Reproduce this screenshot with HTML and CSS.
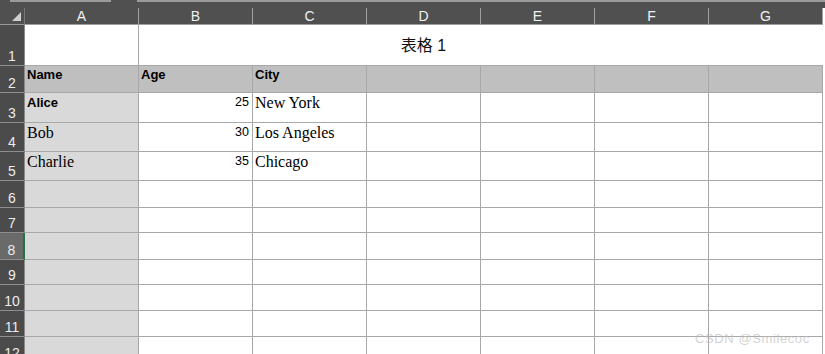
FILE: index.html
```html
<!DOCTYPE html>
<html lang="zh">
<head>
  <meta charset="UTF-8">
  <title>表格 1</title>
  <link rel="stylesheet" href="styles.css">
</head>
<body>
  <div class="topbar">
    <span class="tab tab-a"></span>
    <span class="tab tab-b"></span>
  </div>

  <div class="sheet">
    <!-- column headers -->
    <div class="corner"><span class="corner-mark"></span></div>
    <div class="colhead">A</div>
    <div class="colhead">B</div>
    <div class="colhead">C</div>
    <div class="colhead">D</div>
    <div class="colhead">E</div>
    <div class="colhead">F</div>
    <div class="colhead">G</div>

    <!-- row 1 -->
    <div class="rowhead">1</div>
    <div class="cell"></div>
    <div class="cell title">表格 1</div>
    <div class="cell no-right"></div>

    <!-- row 2 -->
    <div class="rowhead">2</div>
    <div class="cell head">Name</div>
    <div class="cell head">Age</div>
    <div class="cell head">City</div>
    <div class="cell head"></div>
    <div class="cell head"></div>
    <div class="cell head"></div>
    <div class="cell head"></div>

    <!-- row 3 -->
    <div class="rowhead">3</div>
    <div class="cell key bold">Alice</div>
    <div class="cell num">25</div>
    <div class="cell text">New York</div>
    <div class="cell"></div>
    <div class="cell"></div>
    <div class="cell"></div>
    <div class="cell"></div>

    <!-- row 4 -->
    <div class="rowhead">4</div>
    <div class="cell key text">Bob</div>
    <div class="cell num">30</div>
    <div class="cell text">Los Angeles</div>
    <div class="cell"></div>
    <div class="cell"></div>
    <div class="cell"></div>
    <div class="cell"></div>

    <!-- row 5 -->
    <div class="rowhead">5</div>
    <div class="cell key text">Charlie</div>
    <div class="cell num">35</div>
    <div class="cell text">Chicago</div>
    <div class="cell"></div>
    <div class="cell"></div>
    <div class="cell"></div>
    <div class="cell"></div>

    <div class="rowhead">6</div>
    <div class="cell key"></div><div class="cell"></div><div class="cell"></div><div class="cell"></div><div class="cell"></div><div class="cell"></div><div class="cell"></div>

    <div class="rowhead">7</div>
    <div class="cell key"></div><div class="cell"></div><div class="cell"></div><div class="cell"></div><div class="cell"></div><div class="cell"></div><div class="cell"></div>

    <div class="rowhead active">8</div>
    <div class="cell key"></div><div class="cell"></div><div class="cell"></div><div class="cell"></div><div class="cell"></div><div class="cell"></div><div class="cell"></div>

    <div class="rowhead">9</div>
    <div class="cell key"></div><div class="cell"></div><div class="cell"></div><div class="cell"></div><div class="cell"></div><div class="cell"></div><div class="cell"></div>

    <div class="rowhead">10</div>
    <div class="cell key"></div><div class="cell"></div><div class="cell"></div><div class="cell"></div><div class="cell"></div><div class="cell"></div><div class="cell"></div>

    <div class="rowhead">11</div>
    <div class="cell key"></div><div class="cell"></div><div class="cell"></div><div class="cell"></div><div class="cell"></div><div class="cell"></div><div class="cell"></div>

    <div class="rowhead">12</div>
    <div class="cell key"></div><div class="cell"></div><div class="cell"></div><div class="cell"></div><div class="cell"></div><div class="cell"></div><div class="cell"></div>
  </div>

  <div class="watermark">CSDN @Smilecoc</div>
</body>
</html>
```

FILE: styles.css
```css
body {
  margin: 0;
  background: #fff;
  font-family: "Liberation Sans", Arial, sans-serif;
  width: 825px;
  height: 354px;
  overflow: hidden;
  position: relative;
}

.topbar {
  height: 8px;
  background: #505050;
  position: relative;
}

.tab {
  position: absolute;
  top: 0;
  height: 2px;
  background: #9a9a9a;
}

.tab-a {
  left: 10px;
  width: 101px;
}

.tab-b {
  left: 137px;
  width: 688px;
}

.sheet {
  display: grid;
  grid-template-columns: 25px repeat(7, 114px);
  grid-template-rows: 17px 41px 27px 30px 29px 29px 27px 25px 27px 25px 26px 26px 26px;
}

.sheet > div {
  box-sizing: border-box;
}

.corner {
  background: #505050;
  border-bottom: 1px solid #9a9a9a;
  border-right: 1px solid #777;
  position: relative;
}

.corner-mark {
  position: absolute;
  right: 3px;
  bottom: 3px;
  width: 0;
  height: 0;
  border-left: 9px solid transparent;
  border-bottom: 9px solid #d0d0d0;
}

.colhead {
  background: #505050;
  color: #f0f0f0;
  font-size: 14px;
  text-align: center;
  line-height: 17px;
  border-right: 1px solid #a0a0a0;
  border-bottom: 1px solid #a0a0a0;
}

.rowhead {
  background: #4b4b4b;
  color: #ececec;
  font-size: 14px;
  text-align: center;
  display: flex;
  align-items: flex-end;
  justify-content: center;
  padding-bottom: 1px;
  border-right: 1px solid #8a8a8a;
  border-bottom: 1px solid #8e8e8e;
}

.rowhead.active {
  background: #6a6a6a;
  border-right: 2px solid #217346;
}

.cell {
  border-right: 1px solid #a8a8a8;
  border-bottom: 1px solid #a8a8a8;
  padding: 0 3px 0 2px;
  font-size: 13px;
  line-height: 15px;
  color: #000;
  overflow: hidden;
  white-space: nowrap;
}

.cell.no-right {
  border-right: none;
}

.cell.title {
  grid-column: span 5;
  border-right: none;
  display: flex;
  align-items: center;
  justify-content: center;
  font-family: "Liberation Sans", "Noto Sans CJK SC", sans-serif;
  font-size: 16px;
  color: #111;
  padding-top: 1px;
}

.cell.head {
  background: #bfbfbf;
  font-weight: bold;
  padding-top: 1px;
}

.cell.key {
  background: #d9d9d9;
}

.cell.bold {
  font-weight: bold;
  padding-top: 2px;
}

.cell.num {
  text-align: right;
  font-size: 12.5px;
  padding-top: 2px;
}

.cell.text {
  font-family: "Liberation Serif", "Times New Roman", serif;
  font-size: 16px;
  line-height: 18px;
  padding-top: 1px;
}

.watermark {
  position: absolute;
  left: 695px;
  top: 331px;
  font-size: 13px;
  color: rgba(190, 190, 190, 0.7);
  letter-spacing: 0.6px;
}
```
